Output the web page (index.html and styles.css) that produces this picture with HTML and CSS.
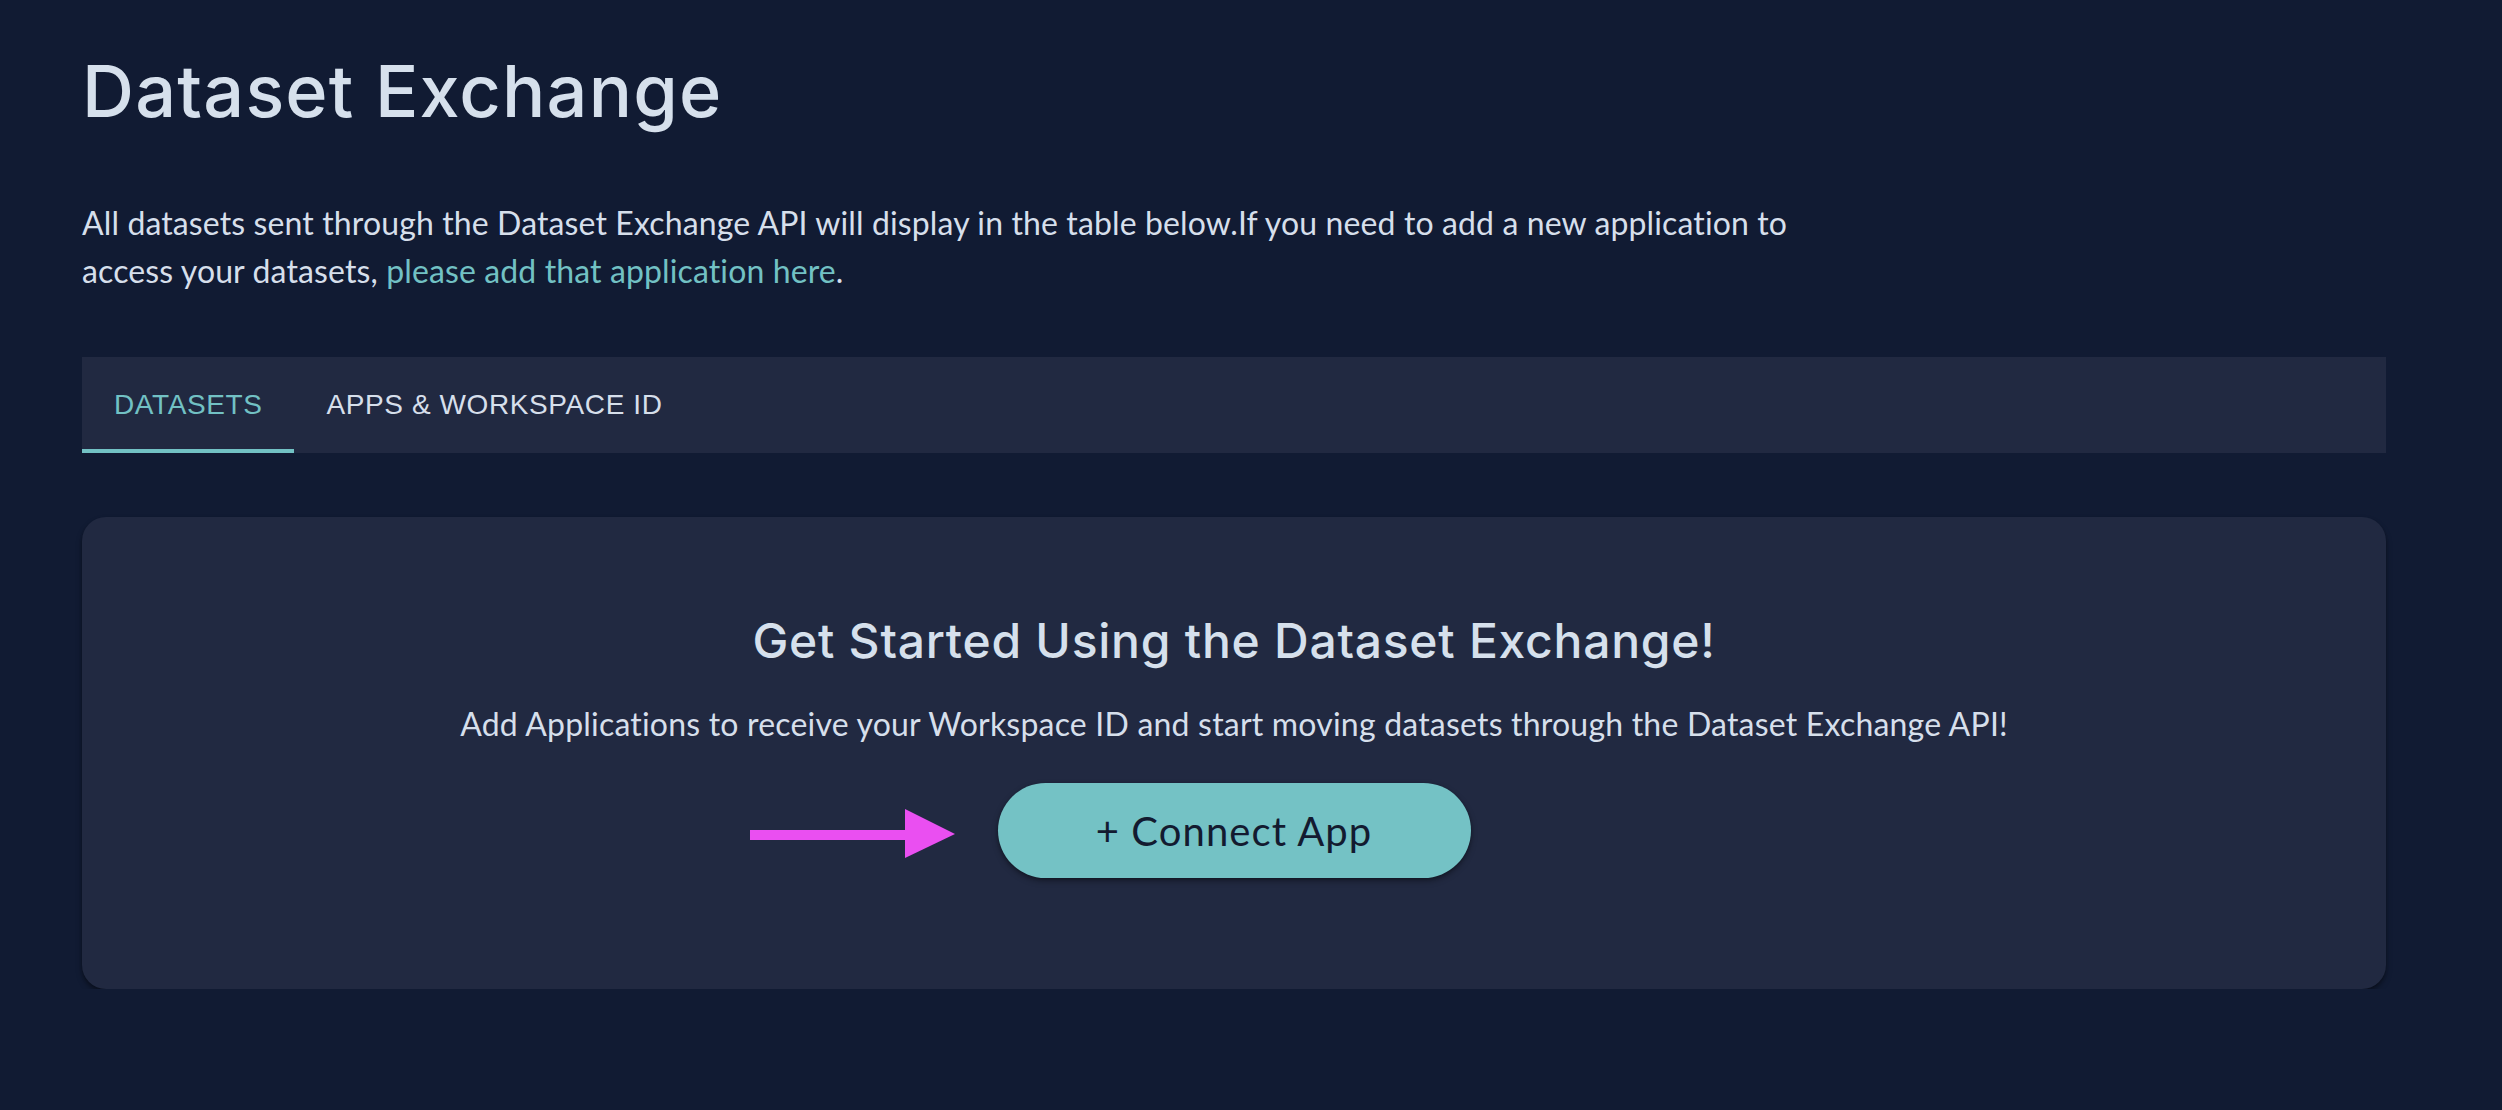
FILE: index.html
```html
<!DOCTYPE html>
<html lang="en">
<head>
<meta charset="utf-8">
<title>Dataset Exchange</title>
<link rel="stylesheet" href="styles.css">
</head>
<body>
<main class="page">
  <h1 class="page-title">Dataset Exchange</h1>
  <p class="intro">All datasets sent through the Dataset Exchange API will display in the table below.If you need to add a new application to access your datasets, <a class="link" href="#">please add that application here</a>.</p>

  <nav class="tabs">
    <div class="tab tab-active">Datasets</div>
    <div class="tab">Apps &amp; Workspace ID</div>
  </nav>

  <section class="card">
    <h2 class="card-title">Get Started Using the Dataset Exchange!</h2>
    <p class="card-text">Add Applications to receive your Workspace ID and start moving datasets through the Dataset Exchange API!</p>
    <div class="action">
      <svg class="arrow" width="205" height="49" viewBox="0 0 205 49" aria-hidden="true">
        <rect x="0" y="21" width="157" height="10" fill="#ea4ff1"/>
        <polygon points="155,0 205,25 155,49" fill="#ea4ff1"/>
      </svg>
      <button class="connect-btn" type="button">+ Connect App</button>
    </div>
  </section>
</main>
</body>
</html>
```

FILE: styles.css
```css
html, body {
  margin: 0;
  padding: 0;
  background: #111b33;
}

body {
  font-family: "Lato", "Liberation Sans", sans-serif;
  color: #d6dfeb;
}

.page {
  width: 2304px;
  padding: 48px 0 0 82px;
}

.page-title {
  margin: 0;
  font-family: "Inter", "Noto Sans", sans-serif;
  font-weight: 500;
  font-size: 72px;
  line-height: 86px;
  color: #d6e0ec;
  letter-spacing: 1.2px;
}

.intro {
  margin: 65px 0 0 0;
  width: 1740px;
  font-size: 32px;
  line-height: 48px;
  letter-spacing: 0.12px;
  color: #d6dfeb;
}

.link {
  color: #72c1c4;
  text-decoration: none;
}

.tabs {
  margin-top: 62px;
  height: 96px;
  background: #212941;
  display: flex;
}

.tab {
  box-sizing: border-box;
  height: 96px;
  padding: 0 32px;
  display: flex;
  align-items: center;
  font-family: "Liberation Sans", "Arial", sans-serif;
  font-size: 28px;
  font-weight: 400;
  letter-spacing: 0.6px;
  text-transform: uppercase;
  color: #d6dfeb;
}

.tab-active {
  color: #72c1c4;
  border-bottom: 4px solid #72c1c4;
  padding-top: 4px;
}

.card {
  margin-top: 64px;
  height: 472px;
  box-sizing: border-box;
  background: #212941;
  border-radius: 24px;
  box-shadow: 0 4px 6px rgba(0, 0, 0, 0.3), 0 2px 3px rgba(0, 0, 0, 0.2);
  padding-top: 95px;
  display: flex;
  flex-direction: column;
  align-items: center;
}

.card-title {
  margin: 0;
  font-family: "Inter", "Noto Sans", sans-serif;
  font-weight: 500;
  font-size: 48px;
  line-height: 58px;
  letter-spacing: 0.75px;
  color: #d6e0ec;
}

.card-text {
  margin: 30px 0 0 0;
  font-size: 32px;
  line-height: 48px;
  letter-spacing: 0.2px;
  color: #d6dfeb;
}

.action {
  margin-top: 35px;
  position: relative;
}

.arrow {
  position: absolute;
  right: calc(100% + 43px);
  top: 26px;
  display: block;
}

.connect-btn {
  display: block;
  box-sizing: border-box;
  width: 473px;
  height: 95px;
  border: none;
  border-radius: 48px;
  background: #74c2c5;
  color: #131b30;
  font-family: "Lato", "Liberation Sans", sans-serif;
  font-size: 40px;
  letter-spacing: 1.1px;
  box-shadow: 0 3px 6px rgba(0, 0, 0, 0.35), 0 1px 3px rgba(0, 0, 0, 0.2);
  cursor: pointer;
}
```
